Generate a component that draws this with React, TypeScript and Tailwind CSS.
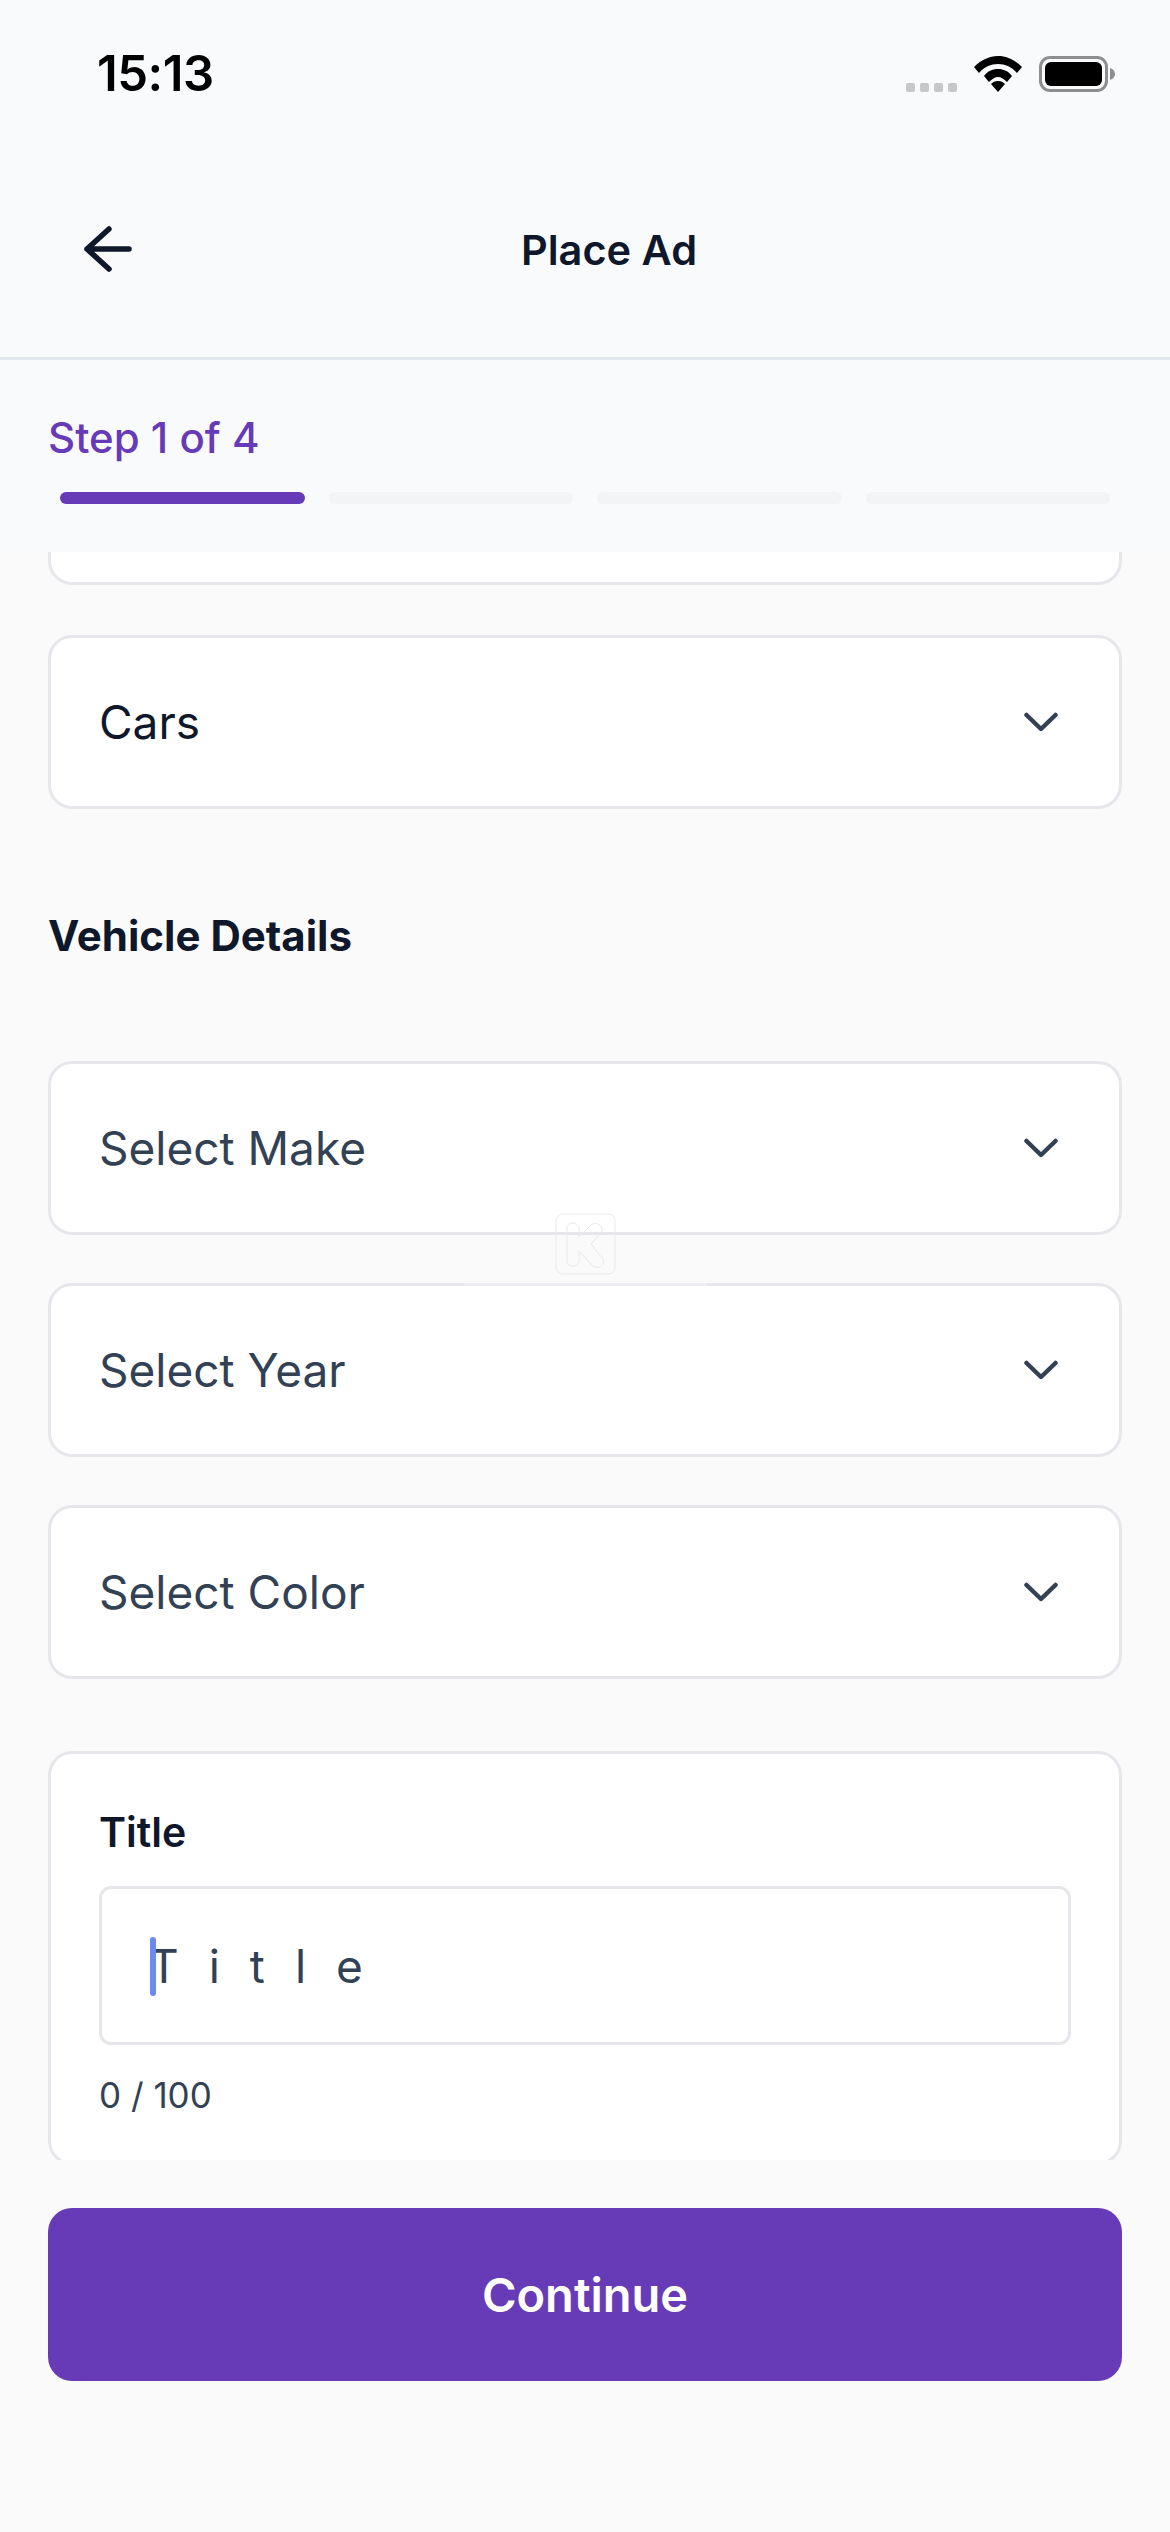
import React from "react";

const font = { fontFamily: "Inter, 'Noto Sans', sans-serif" };

const Chevron = () => (
  <svg className="w-[34px] h-[20px] text-[#334155]" viewBox="0 0 34 20" fill="none">
    <path d="M2.5 3 L17 17 L31.5 3" stroke="currentColor" strokeWidth="4.5" strokeLinecap="round" strokeLinejoin="round" />
  </svg>
);

const SelectBox = ({ label, dark }: { label: string; dark?: boolean }) => (
  <div className="h-[174px] flex items-center justify-between pl-[48px] pr-[61px] bg-white rounded-[24px] border-[3px] border-[#e5e7eb] shrink-0">
    <span className={"text-[46px] leading-[60px] " + (dark ? "text-[#0f172a]" : "text-[#334155]")}>{label}</span>
    <Chevron />
  </div>
);

const StatusBar = () => (
  <div className="h-[148px] flex items-start justify-between pt-[46px] pl-[97px] pr-[55px]">
    <span className="text-[49px] leading-[56px] font-semibold text-black tracking-[-0.5px]">15:13</span>
    <div className="flex items-start pt-[10px]">
      <div className="flex gap-[5px] mt-[27px] mr-[17px]">
        {[0, 1, 2, 3].map((i) => (
          <div key={i} className="w-[9px] h-[9px] rounded-[2px] bg-[#c7c7c9]" />
        ))}
      </div>
      <svg className="w-[48px] h-[36px] mr-[17px]" viewBox="0 0 48 36" fill="black">
        <path d="M24 0 C33 0 41 4 48 11 L43 17 C38 11 31 8 24 8 C17 8 10 11 5 17 L0 11 C7 4 15 0 24 0 Z" />
        <path d="M24 13 C30 13 34 15 38 20 L33 26 C30 23 27 21 24 21 C21 21 18 23 15 26 L10 20 C14 15 18 13 24 13 Z" />
        <path d="M24 25 C27 25 29 26 31 28 L24 36 L17 28 C19 26 21 25 24 25 Z" />
      </svg>
      <div className="flex items-center">
        <div className="w-[69px] h-[36px] rounded-[11px] border-[3px] border-[#8e8e90] p-[3px]">
          <div className="w-full h-full rounded-[6px] bg-black" />
        </div>
        <svg className="w-[5px] h-[12px] ml-[2px]" viewBox="0 0 5 12" fill="#8e8e90">
          <path d="M0 0 C3 1 5 3 5 6 C5 9 3 11 0 12 Z" />
        </svg>
      </div>
    </div>
  </div>
);

export default function App() {
  return (
    <div className="relative w-[1170px] h-[2532px] flex flex-col overflow-hidden bg-[#fafafa]" style={font}>
      <div className="bg-[#f9fafc] shrink-0">
        <StatusBar />
        <div className="relative h-[212px] flex items-center justify-center pl-[48px] pb-[6px] border-b-[3px] border-[#e2e8f0]">
          <svg className="absolute left-[78px] top-[72px] w-[58px] h-[58px]" viewBox="0 0 58 58" fill="none">
            <path d="M31 9 L9 29 L31 49 M9 29 H51" stroke="#0f172a" strokeWidth="5.5" strokeLinecap="round" strokeLinejoin="round" />
          </svg>
          <span className="text-[41.5px] leading-[52px] font-semibold text-[#0f172a]">Place Ad</span>
        </div>
        <div className="h-[192px] pt-[52px] px-[48px]">
          <div className="text-[42px] leading-[52px] font-medium text-[#673ab7]">Step 1 of 4</div>
          <div className="flex gap-[24px] mt-[28px] px-[12px]">
            <div className="flex-1 h-[12px] rounded-full bg-[#673ab7]" />
            <div className="flex-1 h-[12px] rounded-full bg-[#f3f4f6]" />
            <div className="flex-1 h-[12px] rounded-full bg-[#f3f4f6]" />
            <div className="flex-1 h-[12px] rounded-full bg-[#f3f4f6]" />
          </div>
        </div>
      </div>

      <div className="h-[1608px] overflow-hidden px-[48px] shrink-0">
        <div className="flex flex-col -mt-[141px]">
          <div className="h-[174px] bg-white rounded-[24px] border-[3px] border-[#e5e7eb] shrink-0" />
          <div className="mt-[50px]">
            <SelectBox label="Cars" dark />
          </div>
          <div className="mt-[99px] text-[42px] leading-[56px] font-bold text-[#0f172a]">Vehicle Details</div>
          <div className="mt-[97px] flex flex-col gap-[48px]">
            <SelectBox label="Select Make" />
            <SelectBox label="Select Year" />
            <SelectBox label="Select Color" />
          </div>
          <div className="mt-[72px] h-[414px] bg-white rounded-[24px] border-[3px] border-[#e5e7eb] px-[48px] pt-[52px] shrink-0">
            <div className="text-[41px] leading-[52px] font-semibold text-[#0f172a]">Title</div>
            <div className="relative mt-[28px] h-[159px] rounded-[12px] border-[3px] border-[#e5e7eb] flex items-center pl-[47px]">
              <div className="absolute left-[48px] top-[48px] w-[6px] h-[59px] rounded-full bg-[#6b8af0]" />
              <span className="text-[46px] leading-[60px] tracking-[30px] text-[#334155]">Title</span>
            </div>
            <div className="mt-[27px] text-[35px] leading-[46px] text-[#334155]">0 / 100</div>
          </div>
        </div>
      </div>

      <div className="px-[48px] pt-[48px]">
        <div className="h-[173px] rounded-[24px] bg-[#673ab7] flex items-center justify-center">
          <span className="text-[47px] leading-[60px] font-semibold text-white">Continue</span>
        </div>
      </div>

      {/* faint watermark over the cards */}
      <div className="absolute left-[464px] top-[1283px] w-[243px] h-[3px] bg-[#eeeef2]" />
      <svg className="absolute left-[555px] top-[1213px] w-[61px] h-[62px]" viewBox="0 0 61 62" fill="none" stroke="#e9e9ec" strokeWidth="1">
        <rect x="1" y="1" width="59" height="60" rx="7" />
        <path d="M12 16 C12 8 24 8 24 16 V24 L36 12 C42 7 50 14 46 20 L36 31 L48 46 C51 53 41 58 36 51 L24 38 V47 C24 55 12 55 12 47 Z" />
      </svg>
    </div>
  );
}
